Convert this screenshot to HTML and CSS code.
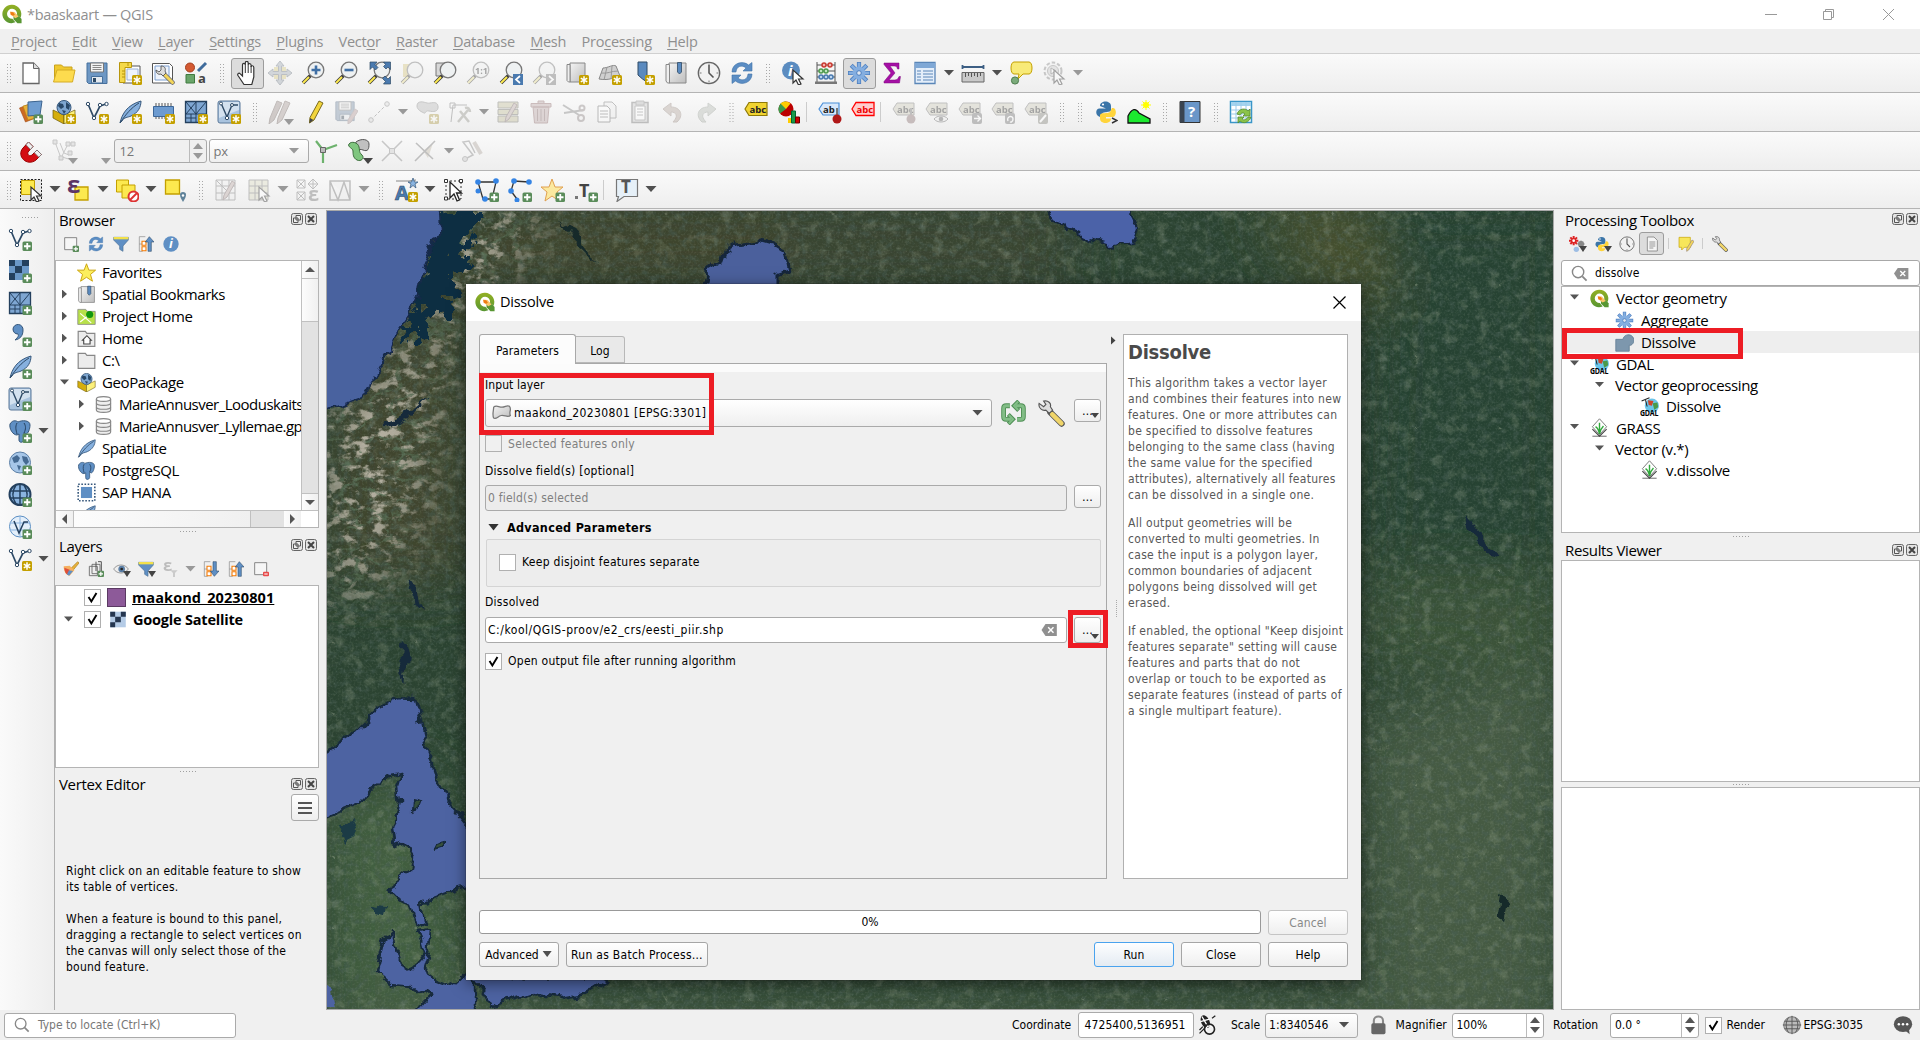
FILE: index.html
```html
<!DOCTYPE html>
<html lang="en">
<head>
<meta charset="utf-8">
<title>*baaskaart — QGIS</title>
<link rel="stylesheet" href="styles.css">
</head>
<body>
<svg class="defs" width="0" height="0">
<defs>
<linearGradient id="gq" x1="0" y1="0" x2="0" y2="1"><stop offset="0" stop-color="#93b023"/><stop offset="1" stop-color="#589632"/></linearGradient>
<linearGradient id="gb" x1="0" y1="0" x2="1" y2="1"><stop offset="0" stop-color="#e8f0f8"/><stop offset="1" stop-color="#7d9fc4"/></linearGradient>
<linearGradient id="gg" x1="0" y1="0" x2="1" y2="1"><stop offset="0" stop-color="#f4f4f4"/><stop offset="1" stop-color="#bdbdbd"/></linearGradient>
<g id="plus"><rect x="14.500" y="14.500" width="9.500" height="9.500" rx="1.5" fill="#5a8c5a"/><path d="M19.250 16v6.500M16 19.250h6.500" stroke="#fff" stroke-width="1.8"/></g>
<g id="spark"><rect x="14" y="14" width="10" height="10" rx="1.500" fill="#c4a000"/><path d="M19 15.200v7.600M15.800 17.100l6.400 3.800M15.800 20.900l6.400-3.800" stroke="#fff" stroke-width="1.500"/></g>
<g id="lens"><path d="M9.500 14.500L2 22" stroke="#3b3b3b" stroke-width="3.600"/><path d="M8 16l-6 6" stroke="#fce94f" stroke-width="2"/><circle cx="15" cy="9" r="7.800" fill="#eef1f2" stroke="#777" stroke-width="1.300"/></g>
<g id="vee"><path d="M3 4l6 14 6-12 6-2" fill="none" stroke="#2e4a66" stroke-width="1.700"/><g fill="#fff" stroke="#2e4a66"><circle cx="3" cy="4" r="1.700"/><circle cx="9" cy="18" r="1.700"/><circle cx="15" cy="5" r="1.700"/><circle cx="21.500" cy="4" r="1.700"/></g></g>
<g id="cur"><path d="M12 9v13l3-3 2.500 5 2.500-1-2.500-5h4.500z" fill="#fff" stroke="#333" stroke-width="1.200"/></g>
<g id="pencil"><path d="M18 1l4 2-9 17-4.500 3 .5-5.500z" fill="#f2d53c" stroke="#7a6a1e"/><path d="M8.500 23l.5-5 3.500 2z" fill="#444"/></g>
<symbol id="q" viewBox="0 0 24 24"><path d="M12 1a11 11 0 1 0 4 21l-3.500-4.200A6 6 0 1 1 18 12.500l4.200 4A11 11 0 0 0 12 1z" fill="url(#gq)"/><path d="M13.500 13.500l5.500-.5 4.500 5V23h-5l-4.500-4.500z" fill="#589632"/><path d="M9.500 9l5.500.5L20 15l-4 2-5.500-4z" fill="#f9c66b"/><path d="M10 9.500l3.500.5 2 3-2 1-3-1z" fill="#ee7913"/></symbol>
<symbol id="new" viewBox="0 0 24 24"><path d="M4 2h10.500L20 7.500V22.500H4z" fill="#fff" stroke="#666" stroke-width="1.300"/><path d="M14.500 2v5.500H20" fill="#ddd" stroke="#666"/></symbol>
<symbol id="open" viewBox="0 0 24 24"><path d="M2.500 20V4h7l2 2h8.500v4" fill="#f0c92e" stroke="#c9a21c"/><path d="M1.500 21l3.500-12h18l-2.500 12z" fill="#fddb4e" stroke="#d5ac24"/></symbol>
<symbol id="save" viewBox="0 0 24 24"><path d="M2 2h20v20.500H3.500L2 21z" fill="#6d97c4" stroke="#47709c"/><path d="M5.500 2h13v9h-13z" fill="#f3f3f3" stroke="#777"/><path d="M7.500 4.500h9M7.500 6.500h9M7.500 8.500h9" stroke="#888"/><path d="M6.500 15.500h11V22h-11z" fill="#e4eaf0" stroke="#47709c"/><path d="M8 17h3v4H8z" fill="#2e4a66"/></symbol>
<symbol id="layout" viewBox="0 0 24 24"><path d="M5 5h17v17H5z" fill="#fff" stroke="#555"/><path d="M9 8h11v11H9z" fill="#eef3fb" stroke="#9ab2d8"/><path d="M1.500 1.500h12v5H7v15H1.500z" fill="#f5d94a" stroke="#b8960c"/><path d="M4 10h3M4 13h3M4 16h3M10 2v3" stroke="#b8960c"/><use href="#spark"/></symbol>
<symbol id="report" viewBox="0 0 24 24"><path d="M1.500 2.500h17l3 3V22h-20z" fill="#fff" stroke="#555"/><path d="M4 5h14v14H4z" fill="#eef3fb" stroke="#7d9fd0"/><path d="M13 13l8.500 8.500" stroke="#666" stroke-width="4.500" stroke-linecap="round"/><path d="M14 14l7.500 7.500" stroke="#f3d55a" stroke-width="3" stroke-linecap="round"/><path d="M10 5c4 0 5 3 4 5l1 2-3 3-2-2c-3 1-5-1-5-4l3 2 2-2z" fill="#ddd" stroke="#555" stroke-width=".9"/></symbol>
<symbol id="style" viewBox="0 0 24 24"><circle cx="6" cy="6.500" r="4.500" fill="#d45a32" stroke="#a33f1e"/><path d="M14 10L22 2" stroke="#3f6c9c" stroke-width="3"/><path d="M2 13.500h8.500V22H2z" fill="#6aa56a" stroke="#3f7a3f"/><text x="14" y="22" font-size="13" fill="#444">a</text></symbol>
<symbol id="pan" viewBox="0 0 24 24"><path d="M9 23.500L3 14.500c-1-2 1-3 2.300-1.600L7.500 15V4c0-2.300 2.800-2.300 2.800 0V2c0-2.200 2.900-2.200 2.900 0V4c0-2 2.900-2 2.900.300V6c0-1.800 2.700-1.700 2.700.500V16l-2 7.500z" fill="#fff" stroke="#333" stroke-width="1.200"/><path d="M10.300 4v8M13.200 4v8M16.100 5v7" stroke="#333"/></symbol>
<symbol id="move" viewBox="0 0 24 24"><path d="M6 6h12v12H6z" fill="#e8d040"/><path d="M12 0l4 5h-2.500v5.500H19V8l5 4-5 4v-2.500h-5.500V19H16l-4 5-4-5h2.500v-5.500H5V16l-5-4 5-4v2.500h5.500V5H8z" fill="#9dafc2" stroke="#5f7388" stroke-width=".9"/></symbol>
<symbol id="zin" viewBox="0 0 24 24"><use href="#lens"/><path d="M15 4.500v9M10.500 9h9" stroke="#3f6fa5" stroke-width="2.600"/></symbol>
<symbol id="zout" viewBox="0 0 24 24"><use href="#lens"/><path d="M10.500 9h9" stroke="#3f6fa5" stroke-width="2.600"/></symbol>
<symbol id="zfull" viewBox="0 0 24 24"><use href="#lens"/><path d="M3 1h7L8 3.500l3 3L8.500 9l-3-3L3 8.500zM23.500 1h-7l2 2.500-2 2L19 8l2-2 2.500 2.500zM23.500 23h-7l2-2.500-3-3 2.500-2.500 3 3 2.500-2.500z" fill="#4a7aaf" stroke="#2e4a66" stroke-width=".7"/></symbol>
<symbol id="zsel" viewBox="0 0 24 24"><path d="M3 3h11v13H3z" fill="#e9c93e"/><use href="#lens"/></symbol>
<symbol id="zlay" viewBox="0 0 24 24"><path d="M3 2h11v13H3z" fill="#d8d8d8" stroke="#777"/><use href="#lens"/></symbol>
<symbol id="znat" viewBox="0 0 24 24"><use href="#lens"/><text x="9" y="12.500" font-size="9" font-weight="bold" fill="#333">1:1</text></symbol>
<symbol id="zlast" viewBox="0 0 24 24"><use href="#lens"/><path d="M14 13h10v11H14z" fill="#4a7aaf"/><path d="M21 15l-4 3.500 4 3.500" fill="none" stroke="#fff" stroke-width="1.700"/></symbol>
<symbol id="znext" viewBox="0 0 24 24"><use href="#lens"/><path d="M14 13h10v11H14z" fill="#777"/><path d="M17 15l4 3.500-4 3.500" fill="none" stroke="#fff" stroke-width="1.700"/></symbol>
<symbol id="nmap" viewBox="0 0 24 24"><path d="M5 2h15v19H5z" fill="url(#gg)" stroke="#888"/><path d="M2 3.500h3V21H3.500L2 19.500z" fill="#eee" stroke="#888"/><use href="#spark"/></symbol>
<symbol id="n3d" viewBox="0 0 24 24"><path d="M5 7c5 0 10-4 13-2l4 10c-6 1-10 5-21 3z" fill="#cfcfcf" stroke="#888"/><path d="M9 6L6 19M14 5l-1 13M3 12c7 1 10-2 17-2" fill="none" stroke="#999"/><use href="#spark"/></symbol>
<symbol id="nbm" viewBox="0 0 24 24"><path d="M7 1h9v20l-4.500-3L7 14z" fill="#5a8abf" stroke="#2e4a66"/><use href="#spark"/></symbol>
<symbol id="bms" viewBox="0 0 24 24"><path d="M5 2h17v20H5z" fill="url(#gg)" stroke="#888"/><path d="M2 3.500h3.500V22H3.500L2 20z" fill="#eee" stroke="#888"/><path d="M13.500 1.500h4V11l-2 2-2-2z" fill="#5a8abf" stroke="#2e4a66" stroke-width=".8"/></symbol>
<symbol id="clock" viewBox="0 0 24 24"><circle cx="12" cy="12" r="10.700" fill="#f2f2f2" stroke="#666" stroke-width="1.300"/><path d="M12 4v8l4.500 4.500" fill="none" stroke="#555" stroke-width="1.600"/><path d="M12 2.500v2M12 19.500v2M2.500 12h2M19.500 12h2" stroke="#777"/></symbol>
<symbol id="refresh" viewBox="0 0 24 24"><path d="M2 11C2 2 13-1 18.500 4L22 1.500V10h-9l3-3C12 3.500 6.500 5 6 11zM22 13c0 9-11 12-16.500 7L2 22.500V14h9l-3 3c4 3.500 9.500 2 10-4z" fill="#5b8dc4" stroke="#4273a8" stroke-width=".6"/></symbol>
<symbol id="ident" viewBox="0 0 24 24"><circle cx="10" cy="9.500" r="9" fill="#5b8cc0"/><text x="7" y="15" font-size="15" font-style="italic" font-weight="bold" font-family="Liberation Serif" fill="#fff">i</text><use href="#cur"/></symbol>
<symbol id="abac" viewBox="0 0 24 24"><path d="M3 1v21M21 1v21M3 4h18M3 10h18M3 16h18" stroke="#555"/><path d="M1 20.500h22V23H1z" fill="#777"/><g stroke-width="1.500"><g fill="#f6b3ad" stroke="#c93a30"><circle cx="10" cy="4" r="2"/><circle cx="16" cy="4" r="2"/></g><g fill="#bfe6bf" stroke="#4f9a4f"><circle cx="7" cy="10" r="2"/><circle cx="12" cy="10" r="2"/></g><g fill="#bcd6f0" stroke="#4a7aaf"><circle cx="7" cy="16" r="2"/><circle cx="12" cy="16" r="2"/><circle cx="17" cy="16" r="2"/></g></g></symbol>
<symbol id="gear" viewBox="0 0 24 24"><g stroke="#4d7fc0" stroke-width="4.200"><path d="M12 1v22M1 12h22M4.200 4.200l15.600 15.600M19.800 4.200L4.200 19.800"/></g><g stroke="#84aee0" stroke-width="2.600"><path d="M12 1.700v20.600M1.700 12h20.600M4.700 4.700l14.600 14.600M19.300 4.700L4.700 19.300"/></g><circle cx="12" cy="12" r="6.500" fill="#84aee0"/><circle cx="12" cy="12" r="2.300" fill="#e3e9f1" stroke="#4d7fc0"/></symbol>
<symbol id="action" viewBox="0 0 24 24"><circle cx="11" cy="10" r="8.500" fill="#eee" stroke="#888" stroke-width="2" stroke-dasharray="3.500 2"/><circle cx="11" cy="10" r="5.500" fill="#ccc" stroke="#888"/><path d="M9 7l5 3-5 3z" fill="#fff" stroke="#666"/><use href="#cur"/></symbol>
<symbol id="sigma" viewBox="0 0 24 24"><path d="M4 2h15v6h-1.500c-.5-2.500-1.500-3-4-3H10l5 7-6 7h5.500c2.500 0 3.500-1 4.500-3.500h1.500L19.500 22H4v-1.500l7-8.500L4 3.500z" fill="#a510a5" stroke="#7c0a7c" stroke-width=".5"/></symbol>
<symbol id="table" viewBox="0 0 24 24"><path d="M2 1.500h20v21H2z" fill="#e4eefa" stroke="#5a86b8" stroke-width="1.300"/><path d="M2 2h20v5H2z" fill="#7fa8d6"/><path d="M4 10h4M4 13h4M4 16h4M4 19h4M10 10h10M10 13h10M10 16h10M10 19h10" stroke="#5a86b8" stroke-width="1.200"/></symbol>
<symbol id="ruler" viewBox="0 0 24 24"><path d="M1 6h22M1.500 4v4M22.500 4v4" stroke="#3d5f84" stroke-width="1.800"/><path d="M1 11.500h22V21H1z" fill="#c9c9c9" stroke="#666"/><path d="M4.500 12v4M7.500 12v3M10.500 12v4M13.500 12v3M16.500 12v4M19.500 12v3" stroke="#555"/></symbol>
<symbol id="tip" viewBox="0 0 24 24"><path d="M5 1h15c4 0 4 12 0 12h-6l-5 5 1-5H5C1 13 1 1 5 1z" fill="#f8ea78" stroke="#c4a000"/><circle cx="6" cy="19.500" r="3.600" fill="#7bab7b" stroke="#4d7c4d"/></symbol>
<symbol id="vlay" viewBox="0 0 24 24"><path d="M.5 8l10-4 6 14-10 4z" fill="#cc6a24" stroke="#a04a10" stroke-width=".6"/><path d="M4 6l13-3 3 14-11 3z" fill="#e8b13a" stroke="#b8860b" stroke-width=".6"/><path d="M9 2l14-1-2 14-12 1z" fill="#6f9dd0" stroke="#3c648f"/><use href="#plus"/></symbol>
<symbol id="gpkg" viewBox="0 0 24 24"><path d="M1 10l11 5v9L1 18z" fill="#d5ae0c" stroke="#6b5a0a" stroke-width=".7"/><path d="M12 15l11-5v8l-11 6z" fill="#fcf07a" stroke="#6b5a0a" stroke-width=".7"/><circle cx="12" cy="7.500" r="7" fill="#7ea6d0" stroke="#35567a"/><path d="M7 3l4 1 1 3-3 2-3-3zM14 2l4 3-1 5-3-2zM10 10l4 1-2 3z" fill="#294868"/></symbol>
<symbol id="gpkgn" viewBox="0 0 24 24"><use href="#gpkg"/><use href="#spark"/></symbol>
<symbol id="veen" viewBox="0 0 24 24"><use href="#vee"/><use href="#spark"/></symbol>
<symbol id="veep" viewBox="0 0 24 24"><use href="#vee"/><use href="#plus"/></symbol>
<symbol id="feather" viewBox="0 0 24 24"><path d="M2 23C4 14 9 5 23 1c0 6-3 12-10 15-3 1.500-7 1-9 5z" fill="#86b0de" stroke="#35567a"/><path d="M2 23C8 14 13 8 21 3" fill="none" stroke="#2e4a66"/></symbol>
<symbol id="feathern" viewBox="0 0 24 24"><use href="#feather"/><use href="#spark"/></symbol>
<symbol id="featherp" viewBox="0 0 24 24"><use href="#feather"/><use href="#plus"/></symbol>
<symbol id="chip" viewBox="0 0 24 24"><path d="M5 3v16M8 3v16M11 3v16M14 3v16M17 3v16M20 3v16" stroke="#555"/><path d="M2.500 6.500h20v10h-20z" fill="#6d9bd0" stroke="#3d6798"/><use href="#spark"/></symbol>
<symbol id="meshb" viewBox="0 0 24 24"><path d="M1.500 1.500h21v21h-21z" fill="#7ea6d2" stroke="#24405e" stroke-width="1.300"/><path d="M2 14h20M12 2v20M2 2l10 12M12 2L2 14M22 2L12 14M2 18h10M7 14v8" stroke="#24405e" fill="none"/></symbol>
<symbol id="meshn" viewBox="0 0 24 24"><use href="#meshb"/><use href="#spark"/></symbol>
<symbol id="meshp" viewBox="0 0 24 24"><use href="#meshb"/><use href="#plus"/></symbol>
<symbol id="gpsb" viewBox="0 0 24 24"><rect x="1" y="1" width="22" height="22" rx="2" fill="#a9c3de" stroke="#5b7899"/><path d="M2 2h20v8L2 18z" fill="#d3e1ef"/><path d="M4 3l6 14 5-12h6" fill="none" stroke="#2e4a66" stroke-width="1.400"/><g fill="#fff" stroke="#2e4a66"><circle cx="4" cy="3.500" r="1.500"/><circle cx="10" cy="18" r="1.700"/><circle cx="15" cy="5" r="1.500"/></g></symbol>
<symbol id="gpsn" viewBox="0 0 24 24"><use href="#gpsb"/><use href="#spark"/></symbol>
<symbol id="gpsp" viewBox="0 0 24 24"><use href="#gpsb"/><use href="#plus"/></symbol>
<symbol id="pens" viewBox="0 0 24 24"><path d="M9 1l5 2-8 17-5 4 1-6z" fill="#a88f86" stroke="#80685f"/><path d="M17 1l5 2-8 17-5 4 1-6z" fill="#b59c93" stroke="#80685f"/></symbol>
<symbol id="pen" viewBox="0 0 24 24"><use href="#pencil"/></symbol>
<symbol id="saved" viewBox="0 0 24 24"><use href="#save" width="22" height="22"/><path d="M21 9l3 2-7 11-3 2v-4z" fill="#c99" stroke="#a88"/></symbol>
<symbol id="seg" viewBox="0 0 24 24"><path d="M4 20L20 4" stroke="#777" stroke-dasharray="3 2"/><circle cx="4" cy="20" r="2.300" fill="#ddd" stroke="#888"/><circle cx="20" cy="4" r="2.300" fill="#ddd" stroke="#888"/></symbol>
<symbol id="blob" viewBox="0 0 24 24"><path d="M2 6c0-6 7-4 10-3s10-3 11 3-5 6-9 5-3 3-5 2-7-3-7-7z" fill="#bbb" stroke="#888"/><use href="#spark"/></symbol>
<symbol id="vtool" viewBox="0 0 24 24"><path d="M3 22L5 5h14M2 3h5v5H2z" fill="none" stroke="#777"/><path d="M10 22L20 10M12 11l9 11M17 8c3-1 5 1 5 4" fill="none" stroke="#998" stroke-width="2.500"/></symbol>
<symbol id="attr" viewBox="0 0 24 24"><path d="M2 2h20v6H2zM2 9.500h20v5H2zM2 16h20v6H2z" fill="#c9c27a" stroke="#776"/><path d="M18 3l3 2-8 14-4 3 1-5z" fill="#c9a8a0" stroke="#866"/></symbol>
<symbol id="trash" viewBox="0 0 24 24"><path d="M4 7h16l-1.500 16h-13zM2 3.500h20V7H2zM9 3.500V1h6v2.500" fill="#cda6a6" stroke="#a66"/><path d="M8.500 9v12M12 9v12M15.500 9v12" stroke="#966"/></symbol>
<symbol id="cut" viewBox="0 0 24 24"><path d="M1 5l16 10M2 13l20-3" stroke="#888" stroke-width="2"/><circle cx="19" cy="18" r="3" fill="none" stroke="#988" stroke-width="2"/><circle cx="20" cy="8" r="2.500" fill="none" stroke="#988" stroke-width="2"/></symbol>
<symbol id="copy" viewBox="0 0 24 24"><path d="M9 2h8l4 4v12H9z" fill="#eee" stroke="#777"/><path d="M3 6h9l3 3v13H3z" fill="#fff" stroke="#666"/><path d="M5 11h8M5 14h8M5 17h8" stroke="#777"/></symbol>
<symbol id="paste" viewBox="0 0 24 24"><path d="M4 2.500h16v20H4z" fill="#ccc" stroke="#777" stroke-width="1.500"/><path d="M7 6h10v14H7z" fill="#fff" stroke="#888"/><path d="M8 1h8v4H8zM9 9h6M9 12h6M9 15h6" fill="#bbb" stroke="#888"/></symbol>
<symbol id="undo" viewBox="0 0 24 24"><path d="M2 9l8-6v4c10 0 13 9 6 15h-4c6-6 3-10-2-10v4z" fill="#c2a897" stroke="#a58b7c"/></symbol>
<symbol id="redo" viewBox="0 0 24 24"><path d="M22 9l-8-6v4C4 7 1 16 8 22h4C6 16 9 12 14 12v4z" fill="#b5bfb0" stroke="#98a394"/></symbol>
<symbol id="abcy" viewBox="0 0 24 24"><path d="M1 9l4-6.500h18v13H5z" fill="#f1d430" stroke="#8f7a08" stroke-width="1.200"/><text x="5.500" y="12.500" font-size="9.500" font-weight="bold" fill="#222">abc</text></symbol>
<symbol id="abcr" viewBox="0 0 24 24"><path d="M1 9l4-6.500h18v13H5z" fill="#fcc" stroke="#f00" stroke-width="1.300"/><text x="5.500" y="12.500" font-size="9.500" font-weight="bold" fill="#e00">abc</text></symbol>
<symbol id="abcp" viewBox="0 0 24 24"><path d="M1 9l4-6h16v12H5z" fill="#d8e8fb" stroke="#4a8fd8" stroke-width="1.200"/><text x="5" y="12.500" font-size="9.500" font-weight="bold" fill="#222">ab</text><path d="M19 8v8" stroke="#777" stroke-width="2"/><circle cx="19" cy="19" r="4.500" fill="#b01818"/></symbol>
<g id="abct"><path d="M1 9l4-6h17v12H5z" fill="#cfcba8" stroke="#777"/><text x="5" y="12.500" font-size="9.500" font-weight="bold" fill="#333">abc</text></g>
<symbol id="abcg" viewBox="0 0 24 24"><use href="#abct"/><rect x="14" y="13" width="10" height="11" rx="2" fill="#777"/><path d="M16 18.500h6M19.500 15.500l3 3-3 3" fill="none" stroke="#fff" stroke-width="1.400"/></symbol>
<symbol id="abch" viewBox="0 0 24 24"><use href="#abct"/><rect x="14" y="13" width="10" height="11" rx="2" fill="#777"/><path d="M17 21c-2-5 5-6 5-2s-3 3-3 3" fill="none" stroke="#fff" stroke-width="1.400"/></symbol>
<symbol id="abci" viewBox="0 0 24 24"><use href="#abct"/><rect x="14" y="13" width="10" height="11" rx="2" fill="#887"/><path d="M16 22l6-7" fill="none" stroke="#fff" stroke-width="2"/></symbol>
<symbol id="abcd" viewBox="0 0 24 24"><use href="#abct"/><path d="M19 8v8" stroke="#777" stroke-width="2"/><circle cx="19" cy="19" r="4.500" fill="#a07070"/></symbol>
<symbol id="abce" viewBox="0 0 24 24"><use href="#abct"/><path d="M9 19c3-4 11-4 14 0-3 4-11 4-14 0z" fill="#eee" stroke="#666"/><circle cx="16" cy="19" r="2.300" fill="#666"/></symbol>
<symbol id="pie" viewBox="0 0 24 24"><circle cx="9" cy="9" r="7.500" fill="#b00"/><path d="M9 9V1.500A7.500 7.500 0 0 0 3 13.500z" fill="#3a9a4a"/><path d="M9 9L3.500 3.500a7.500 7.500 0 0 1 10 0z" fill="#fc0"/><path d="M11 18h4v5h-4z" fill="#fc0"/><path d="M14.500 11h4v12h-4z" fill="#1a9a4a" stroke="#063"/><path d="M18.500 17h4v6h-4z" fill="#c00" stroke="#600"/></symbol>
<symbol id="py" viewBox="0 0 24 24"><path d="M6 6c0-6 11-6 11 0v4c0 3-8 1-9 4l-.500 3C1 17 1 9 5 8.500h7" fill="#3b75a8"/><path d="M18 8c5-1 5 8 1 9h-7v1.500h5c0 6-11 6-11 0V15c1-3 8-1 10-3z" fill="#ffd43b"/><circle cx="9" cy="4.500" r="1.100" fill="#fff"/></symbol>
<symbol id="pyc" viewBox="0 0 24 24"><use href="#py"/><path d="M18 18l5 2.500-5 2.500" fill="none" stroke="#333" stroke-width="1.500"/></symbol>
<symbol id="shade" viewBox="0 0 24 24"><path d="M1 23V16C5 8 9 8 12 13l11 6v4z" fill="#1bea2f" stroke="#111" stroke-width="1.300"/><circle cx="19" cy="5" r="3" fill="#ff0"/><path d="M19 0v10M14 5h10M15.500 1.500l7 7M22.500 1.500l-7 7" stroke="#ff0"/></symbol>
<symbol id="help" viewBox="0 0 24 24"><path d="M2 1.500h20v21H2z" fill="#6a96c8" stroke="#333"/><path d="M2 1.500h4.500v21H2z" fill="#3a4450"/><text x="10" y="17" font-size="15" font-family="Liberation Serif" fill="#fff">?</text></symbol>
<symbol id="sheet" viewBox="0 0 24 24"><path d="M1.500 1.500h21v21h-21z" fill="#fff" stroke="#3a96c8" stroke-width="1.500"/><path d="M2 2h20v4H2z" fill="#a4d3ee"/><path d="M2 10h20M2 14h20M2 18h20M7 2v20M12 2v20M17 2v20" stroke="#9ccbe8"/><path d="M8 14c2-6 9-6 11-3l2-2v7h-7l2-2c-2-2-4-1-5 1zM22 17c-2 6-8 7-11 4l-2 2v-6h6l-2 2c2 2 5 0 6-2z" fill="#8bc34a" stroke="#558b2f" stroke-width=".8"/></symbol>
<symbol id="magnet" viewBox="0 0 24 24"><path d="M9.500 3l4.500 4.500-5 5.500c-1 2.500 1.500 5 4 3l5-5 4.500 4.500-5.500 5.500C8 28-3 17 4 9z" fill="#d40d12" stroke="#900"/><path d="M9.500 3l4.500 4.500-2.500 3L7 5.800zM18 11l4.500 4.500-2.700 2.700-4.500-4.500z" fill="#eee" stroke="#777" stroke-width=".8"/></symbol>
<symbol id="snap" viewBox="0 0 24 24"><path d="M3 3l6 16 7-14h5M8 4l4 10 5 2M10 18l10 3" fill="none" stroke="#888"/><g fill="#ccc" stroke="#888"><path d="M1 1h4v4H1zM7 17h4v4H7zM14 3h4v4h-4zM19 3h4v4h-4zM16 12h4v4h-4z"/></g></symbol>
<symbol id="topo" viewBox="0 0 24 24"><path d="M2 2l7 9L9 24M9 11l14-5" fill="none" stroke="#6db26d" stroke-width="2.200"/><path d="M6.500 8.500h5v5h-5z" fill="#bbb" stroke="#666"/></symbol>
<symbol id="overlap" viewBox="0 0 24 24"><path d="M9 3c5-4 13-3 13 2s-1 8-6 6-8 2-8-2 0-4 1-6z" fill="#c0c0c0" stroke="#555"/><path d="M2 5c2-3 9-2 10 3s0 5 3 8-1 7-5 5S6 15 6 12 0 8 2 5z" fill="#7fc67f" stroke="#3f6f3f"/></symbol>
<symbol id="cross" viewBox="0 0 24 24"><path d="M2 2l20 20M22 2L2 22" stroke="#888" stroke-width="1.600"/><path d="M9.500 9.500h5v5h-5z" fill="#ccc" stroke="#888"/></symbol>
<symbol id="cross2" viewBox="0 0 24 24"><path d="M5 5l6 6 9-7-5 15-4-6z" fill="#cb9"/><path d="M2 22L22 2M3 4l17 16" fill="none" stroke="#777" stroke-width="1.600"/></symbol>
<symbol id="trace" viewBox="0 0 24 24"><path d="M4 20l8-4L2 3l6-1 6 12" fill="none" stroke="#888" stroke-width="1.500"/><circle cx="4" cy="20" r="2.500" fill="#ccc" stroke="#888"/><path d="M13 3l7 12" stroke="#b9a99a" stroke-width="4" fill="none"/></symbol>
<symbol id="sel" viewBox="0 0 24 24"><path d="M1.500 1.500h21v21h-21z" fill="#e6e6e6" stroke="#222" stroke-dasharray="2 1.500"/><path d="M2.500 2.500h13v14h-13z" fill="#fce94f" stroke="#c4a000"/><use href="#cur"/></symbol>
<symbol id="expr" viewBox="0 0 24 24"><path d="M8 9h13v13H8z" fill="#fce94f" stroke="#c4a000" stroke-width="1.300"/><text x="0" y="15" font-size="24" font-family="Liberation Serif" font-weight="bold" fill="#5c3566">ε</text></symbol>
<symbol id="desel" viewBox="0 0 24 24"><path d="M1.500 2h12v12h-12z" fill="#fce94f" stroke="#c4a000"/><path d="M7 7h13v13H7z" fill="#fce94f" stroke="#c4a000"/><circle cx="18.500" cy="18.500" r="5" fill="#fff" stroke="#d33" stroke-width="2"/><path d="M15 22l7-7" stroke="#d33" stroke-width="2"/></symbol>
<symbol id="selloc" viewBox="0 0 24 24"><path d="M2.500 2h14v14h-14z" fill="#fce94f" stroke="#c4a000" stroke-width="1.300"/><path d="M20 24c-4-6-4-10 0-10s4 4 0 10z" fill="#5f8299"/><circle cx="20" cy="17.500" r="1.200" fill="#fff"/></symbol>
<symbol id="mesh1" viewBox="0 0 24 24"><path d="M2 2h19v20H2zM2 8h19M2 15h19M8 2v20M15 2v20M2 2l6 6M8 8l7 7" fill="#eee" stroke="#777"/><path d="M18 3l3 2-8 14-4 3 1-5z" fill="#c9a8a0" stroke="#866"/></symbol>
<symbol id="mesh2" viewBox="0 0 24 24"><path d="M2 2h19v20H2zM2 8h19M2 15h19M8 2v20M15 2v20" fill="#dda" stroke="#777"/><use href="#cur"/></symbol>
<symbol id="mesh3" viewBox="0 0 24 24"><path d="M2 2h8v8H2zM2 2l8 8M10 2l-8 8M18 1l5 5-5 5-5-5zM13 6h10M18 1v10M2 14h8v8H2zM2 14l8 8M10 14l-8 8" fill="none" stroke="#777"/><text x="13" y="23" font-size="20" font-family="Liberation Serif" font-weight="bold" fill="#777">ε</text></symbol>
<symbol id="mesh4" viewBox="0 0 24 24"><path d="M2 3h20v19H2zM2 3l8 19L16 4l6 18" fill="#eee" stroke="#777" stroke-width="1.500"/></symbol>
<symbol id="annA" viewBox="0 0 24 24"><path d="M2 3h13l7-1" fill="none" stroke="#888"/><text x="1" y="22" font-size="20" font-family="DejaVu Serif" font-weight="bold" fill="#4a7aaf" stroke="#2e4a66" stroke-width=".6">A</text><path d="M19 0l1.500 4H24l-3 2 1 4-3-2.500L16 10l1-4-3-2h3.500z" fill="#8ab4e0" stroke="#35567a" stroke-width=".7"/><use href="#spark"/></symbol>
<symbol id="annS" viewBox="0 0 24 24"><path d="M4 3h15v18H4z" fill="none" stroke="#333" stroke-dasharray="2 2"/><path d="M2.500 1.500h3v3h-3zM17.500 1.500h3v3h-3zM2.500 19h3v3h-3z" fill="#fff" stroke="#333"/><path d="M8 4v16l4-4 3 7 2.500-1-3-7h5z" fill="#fff" stroke="#222" stroke-width="1.300"/></symbol>
<symbol id="annP" viewBox="0 0 24 24"><path d="M3 4h18l-4 17H8z" fill="none" stroke="#333" stroke-width="1.300"/><g fill="#3584e4"><circle cx="3" cy="4" r="2.800"/><circle cx="21" cy="3" r="2.800"/><circle cx="10" cy="21" r="2.800"/><circle cx="3" cy="13" r="2.500"/></g><use href="#plus"/></symbol>
<symbol id="annL" viewBox="0 0 24 24"><path d="M21 4L6 3 3 13l6 8" fill="none" stroke="#333" stroke-width="1.300"/><g fill="#3584e4"><circle cx="21" cy="4" r="2.800"/><circle cx="6" cy="3" r="2.800"/><circle cx="3" cy="13" r="2.800"/><circle cx="9" cy="22" r="2.500"/></g><use href="#plus"/></symbol>
<symbol id="annM" viewBox="0 0 24 24"><path d="M11 1l3 8h8l-6 5 2 9-7-5-7 5 2-9-6-5h8z" fill="#fbe9a0" stroke="#e0a050"/><use href="#plus"/></symbol>
<symbol id="annT" viewBox="0 0 24 24"><path d="M1 18h3v3H1z" fill="#777"/><text x="5" y="19" font-size="18" font-family="Liberation Serif" font-weight="bold" fill="#444">T</text><use href="#plus"/></symbol>
<symbol id="annB" viewBox="0 0 24 24"><path d="M1.500 1.500h21v17H9l-7 5 1.500-5h-2z" fill="#e6f0f8" stroke="#777" stroke-width="1.200"/><text x="6" y="15" font-size="17" font-family="Liberation Serif" font-weight="bold" fill="#555">T</text></symbol>
<symbol id="raster" viewBox="0 0 24 24"><path d="M1 1h20v20H1z" fill="#6b98c8"/><path d="M1 1h6v6H1zM14 1h7v6h-7zM7 7h7v7H7zM1 14h6v7H1z" fill="#24405e"/><use href="#plus"/></symbol>
<symbol id="comma" viewBox="0 0 24 24"><path d="M5 6a5 5 0 1 1 10 1c0 6-3 9-8 10 3-3 4-4 3-6-3 0-5-2-5-5z" fill="#5f8fc4" stroke="#35567a"/><use href="#plus"/></symbol>
<symbol id="pg" viewBox="0 0 24 24"><path d="M2 5c3-5 7-3 8-2 4-2 12-2 12 3 0 4-2 9-4 9l-2-1v7c-1 3-5 3-5 0v-6l-2 1C5 16 1 10 2 5z" fill="#5f8fc4" stroke="#35567a"/><path d="M9 4c-2 4-1 7 0 11M16 4c2 3 2 6 0 10" fill="none" stroke="#24405e"/></symbol>
<symbol id="pgp" viewBox="0 0 24 24"><use href="#pg"/><use href="#plus"/></symbol>
<symbol id="globe1" viewBox="0 0 24 24"><circle cx="12" cy="11.500" r="10.500" fill="#a6c6e8" stroke="#5b7fa6"/><path d="M4 7l5-3 3 3-2 4-4 1zM14 5l5 1 2 5-3 3-3-4zM9 14l4 1-2 5z" fill="#456a92"/><use href="#plus"/></symbol>
<symbol id="globe2" viewBox="0 0 24 24"><circle cx="12" cy="11.500" r="10.500" fill="#8ab4e0" stroke="#24405e" stroke-width="2"/><path d="M2 8h20M2 15h20M12 1v21M8 2c-4 6-4 13 0 19M16 2c4 6 4 13 0 19" fill="none" stroke="#24405e" stroke-width="1.500"/><use href="#plus"/></symbol>
<symbol id="globe3" viewBox="0 0 24 24"><circle cx="12" cy="11.500" r="10.500" fill="#e4effa" stroke="#5b8fc4"/><path d="M2 8h20M2 15h20M12 1v21" stroke="#8ab4e0"/><path d="M6 6l5 12 5-11h4" fill="none" stroke="#24405e" stroke-width="1.500"/><use href="#plus"/></symbol>
<symbol id="addbox" viewBox="0 0 24 24"><path d="M2.500 2.500h18v18h-18z" fill="#f6f6f6" stroke="#777" stroke-width="1.300"/><use href="#plus"/></symbol>
<symbol id="rembox" viewBox="0 0 24 24"><path d="M2.500 2.500h18v18h-18z" fill="#f6f6f6" stroke="#777" stroke-width="1.300"/><rect x="15" y="16" width="9" height="7" rx="1.500" fill="#e84a4a"/><path d="M17 19.500h5" stroke="#fff" stroke-width="1.600"/></symbol>
<symbol id="funnel" viewBox="0 0 24 24"><path d="M1 2h22v4l-8 9v8l-5-3v-5L1 6z" fill="#5f8fc4" stroke="#4a6f96"/><path d="M1 1.500h22V5H1z" fill="#f2e04a"/></symbol>
<symbol id="collapse" viewBox="0 0 24 24"><path d="M2 1h9M2 1v22h5M2 12h5" fill="none" stroke="#888"/><path d="M6 8h6v6H6zM6 16h6v6H6z" fill="#fff" stroke="#f57900" stroke-width="1.600"/><path d="M17 1l7 8h-4v14h-5V9h-4z" fill="#5f8fc4" stroke="#24405e" stroke-width=".8"/></symbol>
<symbol id="expand" viewBox="0 0 24 24"><path d="M2 1h9M2 1v22h5M2 12h5" fill="none" stroke="#888"/><path d="M6 8h6v6H6zM6 16h6v6H6z" fill="#fff" stroke="#f57900" stroke-width="1.600"/><path d="M17 23l7-8h-4V1h-5v14h-4z" fill="#5f8fc4" stroke="#24405e" stroke-width=".8"/></symbol>
<symbol id="info" viewBox="0 0 24 24"><circle cx="12" cy="12" r="11.500" fill="#5f8fc4"/><text x="9" y="18.500" font-size="19" font-style="italic" font-weight="bold" font-family="Liberation Serif" fill="#fff">i</text></symbol>
<symbol id="brush" viewBox="0 0 24 24"><path d="M22 1l2 2-9 11-3-3z" fill="#e8b13a" stroke="#a87c1a"/><path d="M1 8l9-1 7 7-7 8C5 22 1 16 1 8z" fill="#f5b060"/><path d="M2 10l8 3-3 8c-3-2-5-6-5-11z" fill="#e0503a"/><path d="M9 14l6 1-6 7-3-2z" fill="#5f8fc4"/></symbol>
<symbol id="group" viewBox="0 0 24 24"><path d="M2 8h12v14H2zM6 5h12v14H6z" fill="#eee" stroke="#666" stroke-width="1.300"/><path d="M12 15V1M15 1h5v15" fill="none" stroke="#555" stroke-width="1.500"/><use href="#plus"/></symbol>
<symbol id="eye" viewBox="0 0 24 24"><path d="M1 12c5-8 17-8 22 0-5 8-17 8-22 0z" fill="#eee" stroke="#999" stroke-width="1.500"/><circle cx="13" cy="12" r="5" fill="#5b7fa6"/><circle cx="13" cy="12" r="2" fill="#222"/></symbol>
<symbol id="eps" viewBox="0 0 24 24"><text x="0" y="15" font-size="25" font-family="Liberation Serif" font-weight="bold" fill="#777">ε</text><path d="M11 14h11l-4 4v6h-3v-6z" fill="#999"/></symbol>
<symbol id="star" viewBox="0 0 24 24"><path d="M12 1l3 8h8.500l-6.500 5.500 2.500 8.500-7.500-5-7.500 5L7 14.500.5 9H9z" fill="#fcee5c" stroke="#c9a20c" stroke-width="1.200"/></symbol>
<symbol id="phome" viewBox="0 0 24 24"><path d="M1 3h10l2 2.500h10V22H1z" fill="#b8e04a" stroke="#888"/><path d="M4 19L18 8M4 8l14 12" stroke="#fff" stroke-width="1.500"/><circle cx="16" cy="9.500" r="4.500" fill="#12960e"/></symbol>
<symbol id="fold" viewBox="0 0 24 24"><path d="M1.500 3h9l2 2.500h10V22h-21z" fill="#ececec" stroke="#888" stroke-width="1.500"/></symbol>
<symbol id="home" viewBox="0 0 24 24"><use href="#fold"/><path d="M7 14l5.500-5.500L18 14h-1.500v5h-8v-5z" fill="#fff" stroke="#444" stroke-width="1.400"/></symbol>
<symbol id="db" viewBox="0 0 24 24"><path d="M3 5v14c0 4 18 4 18 0V5" fill="#eee" stroke="#888" stroke-width="1.500"/><ellipse cx="12" cy="5" rx="9" ry="3" fill="#fff" stroke="#888" stroke-width="1.500"/><path d="M3 10c0 4 18 4 18 0M3 15c0 4 18 4 18 0" fill="none" stroke="#888" stroke-width="1.500"/></symbol>
<symbol id="hana" viewBox="0 0 24 24"><path d="M1.500 1.500h21v21h-21z" fill="none" stroke="#35567a" stroke-width="2" stroke-dasharray="2 2"/><path d="M5 5h14v14H5z" fill="#5f8fc4"/></symbol>
<symbol id="gsat" viewBox="0 0 24 24"><path d="M1 1h22v22H1z" fill="#b4cbe6"/><path d="M1 1h7v7H1zM16 1h7v7h-7zM8 8h8v8H8zM1 16h7v7H1z" fill="#253650"/></symbol>
<symbol id="gears" viewBox="0 0 24 24"><g stroke-width="3"><path d="M7 0v14M0 7h14M2 2l10 10M12 2L2 12" stroke="#d22"/><path d="M18 7v10M13 12h10M14.500 8.500l7 7M21.500 8.500l-7 7" stroke="#888"/></g><circle cx="7" cy="7" r="2" fill="#fff"/><circle cx="11" cy="20" r="4" fill="#9dbde4"/></symbol>
<symbol id="doc" viewBox="0 0 24 24"><path d="M5 1.500h10l5 5V22.500H5z" fill="#f4f4f4" stroke="#888" stroke-width="1.300"/><path d="M8 9h9M8 12h9M8 15h9M8 18h6" stroke="#888" stroke-width="1.300"/></symbol>
<symbol id="note" viewBox="0 0 24 24"><path d="M1.500 2h17v15h-9l-4 4v-4h-4z" fill="#f7e65a" stroke="#c4a000"/><path d="M21 6l3 2-8 13-3 2v-4z" fill="#f3d55a" stroke="#987"/></symbol>
<symbol id="wrench" viewBox="0 0 24 24"><path d="M11 11l10 10" stroke="#555" stroke-width="5.500" stroke-linecap="round"/><path d="M12.500 12.500l8.300 8.300" stroke="#f0d56a" stroke-width="4" stroke-linecap="round"/><path d="M5 1c4-1 7 2 6 5l2 3-3 3-3-3C4 10 0 7 1 3l4 3 2-2z" fill="#ddd" stroke="#555"/></symbol>
<symbol id="glass" viewBox="0 0 24 24"><circle cx="10" cy="10" r="8" fill="none" stroke="#888" stroke-width="2"/><path d="M16 16l6 6" stroke="#888" stroke-width="2.500"/></symbol>
<symbol id="clear" viewBox="0 0 24 24"><path d="M0 12l6-9h17v18H6z" fill="#909090"/><path d="M10 8l8 8M18 8l-8 8" stroke="#fff" stroke-width="2.200"/></symbol>
<symbol id="diss" viewBox="0 0 24 24"><path d="M1 8h9a7 7 0 1 1 10 7.500h-2V23H1z" fill="#7d97ad" stroke="#5f7b92"/></symbol>
<symbol id="gdal" viewBox="0 0 24 24"><circle cx="15" cy="11" r="9" fill="#6cc5ea"/><path d="M10 4l7 1-2 6-4-1z" fill="#d0452a"/><path d="M16 8l6-1 1 6-5 3z" fill="#4a9a4a"/><path d="M2 5l10-4M7 4l2 8" stroke="#222" stroke-width="1.300"/><text x="0" y="23.500" font-size="11" font-weight="bold" textLength="23" lengthAdjust="spacingAndGlyphs" fill="#000">GDAL</text></symbol>
<symbol id="grass" viewBox="0 0 24 24"><path d="M12 1l9 10-9 10-9-10z" fill="#fff" stroke="#777" stroke-width="1.200"/><path d="M3 14l9 9 9-9" fill="none" stroke="#444" stroke-width="1.400"/><path d="M12 20V6M12 20c-1-5-2-7-5-9M12 20c1-5 2-7 5-10" fill="none" stroke="#2fa83a" stroke-width="1.800"/><path d="M3 23h18" stroke="#444"/></symbol>
<symbol id="poly" viewBox="0 0 24 24"><path d="M2 5c3-3 6 0 10 0s6-3 9-1c3 4-1 6 1 11-3 3-7-1-11 0s-6 5-9 3c-2-4 0-9 0-13z" fill="url(#gg)" stroke="#777" stroke-width="1.500"/></symbol>
<symbol id="iter" viewBox="0 0 24 24"><g fill="none"><path d="M8.500 5.500H5Q2.500 5.500 2.500 8v8q0 2.500 2.500 2.500h5M15.500 18.500H19q2.500 0 2.500-2.500V8q0-2.500-2.500-2.500h-5" stroke="#4f8f55" stroke-width="4.600"/><path d="M17 1l-4.500 4.500L17 10M7 14l4.500 4.500L7 23" stroke="#4f8f55" stroke-width="4"/><path d="M8.500 5.500H5Q2.500 5.500 2.500 8v8q0 2.500 2.500 2.500h5M15.500 18.500H19q2.500 0 2.500-2.500V8q0-2.500-2.500-2.500h-5" stroke="#82bd86" stroke-width="2.800"/><path d="M16.500 1.500l-4 4 4 4M7.500 14.500l4 4-4 4" stroke="#82bd86" stroke-width="2"/></g></symbol>
<symbol id="chk" viewBox="0 0 17 17"><path d="M4 8l3.200 5L13 3.500" fill="none" stroke="#000" stroke-width="2.200"/></symbol>
<symbol id="float" viewBox="0 0 12 12"><rect x=".5" y=".5" width="11" height="11" rx="2" fill="#e4e4e4" stroke="#666"/><path d="M5 2.500h4.500V7H5zM2.500 5H7v4.500H2.500z" fill="#eee" stroke="#555"/></symbol>
<symbol id="shut" viewBox="0 0 12 12"><rect x=".5" y=".5" width="11" height="11" rx="2" fill="#e4e4e4" stroke="#666"/><path d="M3 3l6 6M9 3L3 9" stroke="#444" stroke-width="2"/></symbol>
<symbol id="extent" viewBox="0 0 24 24"><ellipse cx="10" cy="8" rx="5" ry="8" transform="rotate(-25 10 8)" fill="#222"/><path d="M6 2l7 12M4 8l11-3M12 22c5 2 9-2 8-6s-8-4-9 0z" fill="none" stroke="#fff" stroke-width="1.500"/><circle cx="15" cy="17" r="6" fill="none" stroke="#222" stroke-width="2"/><path d="M3 18l4-4M18 4l4-3M3 22l6-6" stroke="#222" stroke-width="1.500"/></symbol>
<symbol id="lock" viewBox="0 0 24 24"><path d="M7 11V7c0-7 11-7 11 0v4" fill="none" stroke="#888" stroke-width="2.500"/><rect x="4" y="10" width="17" height="13" rx="2" fill="#666"/></symbol>
<symbol id="crs" viewBox="0 0 24 24"><circle cx="12" cy="12" r="10" fill="#bbb" stroke="#666"/><path d="M1 12h22M3 7.500h18M3 16.500h18M12 1v22M8 3c-4 5-4 13 0 18M16 3c4 5 4 13 0 18" fill="none" stroke="#555" stroke-width="1.100"/></symbol>
<symbol id="bubble" viewBox="0 0 24 24"><ellipse cx="12" cy="11" rx="11" ry="9.500" fill="#555"/><path d="M14 18l6 5-1-8z" fill="#555"/><circle cx="7" cy="11" r="1.500" fill="#fff"/><circle cx="12" cy="11" r="1.500" fill="#fff"/><circle cx="17" cy="11" r="1.500" fill="#fff"/></symbol>
</defs>
</svg>

<div class="app">
<header class="titlebar"><svg class="logo"><use href="#q"/></svg><span class="wintitle">*baaskaart — QGIS</span>
<svg class="winctl" viewBox="0 0 132 12"><path d="M0 6.500h12M58.500 3.500h8v8h-8zM60.500 3.500v-2h8v8h-2M118 1l11 11M129 1l-11 11" fill="none" stroke="#999"/></svg></header>
<nav class="menu"><span><u>P</u>roject</span><span><u>E</u>dit</span><span><u>V</u>iew</span><span><u>L</u>ayer</span><span><u>S</u>ettings</span><span><u>P</u>lugins</span><span>Vect<u>o</u>r</span><span><u>R</u>aster</span><span><u>D</u>atabase</span><span><u>M</u>esh</span><span>Pro<u>c</u>essing</span><span><u>H</u>elp</span></nav>

<div class="tb"><i class="h"></i><b><svg><use href="#new"/></svg></b><b><svg><use href="#open"/></svg></b><b><svg><use href="#save"/></svg></b><b><svg><use href="#layout"/></svg></b><b><svg><use href="#report"/></svg></b><b><svg><use href="#style"/></svg></b><i class="h"></i><b class="on"><svg><use href="#pan"/></svg></b><b class="off"><svg><use href="#move"/></svg></b><b><svg><use href="#zin"/></svg></b><b><svg><use href="#zout"/></svg></b><b><svg><use href="#zfull"/></svg></b><b class="off"><svg><use href="#zsel"/></svg></b><b><svg><use href="#zlay"/></svg></b><b class="off"><svg><use href="#znat"/></svg></b><b><svg><use href="#zlast"/></svg></b><b class="off"><svg><use href="#znext"/></svg></b><b><svg><use href="#nmap"/></svg></b><b><svg><use href="#n3d"/></svg></b><b><svg><use href="#nbm"/></svg></b><b><svg><use href="#bms"/></svg></b><b><svg><use href="#clock"/></svg></b><b><svg><use href="#refresh"/></svg></b><i class="h"></i><b><svg><use href="#ident"/></svg></b><b><svg><use href="#abac"/></svg></b><b class="on"><svg><use href="#gear"/></svg></b><b><svg><use href="#sigma"/></svg></b><b><svg><use href="#table"/></svg></b><i class="a"></i><b><svg><use href="#ruler"/></svg></b><i class="a"></i><b><svg><use href="#tip"/></svg></b><b class="off"><svg><use href="#action"/></svg></b><i class="a dim"></i></div>

<div class="tb"><i class="h"></i><b><svg><use href="#vlay"/></svg></b><b><svg><use href="#gpkgn"/></svg></b><b><svg><use href="#veen"/></svg></b><b><svg><use href="#feathern"/></svg></b><b><svg><use href="#chip"/></svg></b><b><svg><use href="#meshn"/></svg></b><b><svg><use href="#gpsn"/></svg></b><i class="h"></i><b class="off dd"><svg><use href="#pens"/></svg></b><b><svg><use href="#pen"/></svg></b><b class="off"><svg><use href="#saved"/></svg></b><b class="off"><svg><use href="#seg"/></svg></b><i class="a dim"></i><b class="off"><svg><use href="#blob"/></svg></b><b class="off"><svg><use href="#vtool"/></svg></b><i class="a dim"></i><b class="off"><svg><use href="#attr"/></svg></b><b class="off"><svg><use href="#trash"/></svg></b><b class="off"><svg><use href="#cut"/></svg></b><b class="off"><svg><use href="#copy"/></svg></b><b class="off"><svg><use href="#paste"/></svg></b><b class="off"><svg><use href="#undo"/></svg></b><b class="off"><svg><use href="#redo"/></svg></b><i class="h n"></i><b><svg><use href="#abcy"/></svg></b><b><svg><use href="#pie"/></svg></b><i class="s"></i><b><svg><use href="#abcp"/></svg></b><b><svg><use href="#abcr"/></svg></b><i class="s"></i><b class="off"><svg><use href="#abcd"/></svg></b><b class="off"><svg><use href="#abce"/></svg></b><b class="off"><svg><use href="#abcg"/></svg></b><b class="off"><svg><use href="#abch"/></svg></b><b class="off"><svg><use href="#abci"/></svg></b><i class="h"></i><i class="h w"></i><b><svg><use href="#pyc"/></svg></b><b><svg><use href="#shade"/></svg></b><i class="h"></i><b><svg><use href="#help"/></svg></b><i class="h"></i><b><svg><use href="#sheet"/></svg></b></div>

<div class="tb"><i class="h"></i><b><svg><use href="#magnet"/></svg></b><b class="off dd"><svg><use href="#snap"/></svg></b><b class="off dd"></b><span class="spin dis big"><em>12</em><i class="ud"></i></span><span class="combo dis unit"><em>px</em><i class="a dim"></i></span><b><svg><use href="#topo"/></svg></b><b class="dd"><svg><use href="#overlap"/></svg></b><b class="off"><svg><use href="#cross"/></svg></b><b class="off"><svg><use href="#cross2"/></svg></b><i class="a dim"></i><b class="off"><svg><use href="#trace"/></svg></b></div>

<div class="tb last"><i class="h"></i><b><svg><use href="#sel"/></svg></b><i class="a"></i><b><svg><use href="#expr"/></svg></b><i class="a"></i><b><svg><use href="#desel"/></svg></b><i class="a"></i><b><svg><use href="#selloc"/></svg></b><i class="h"></i><b class="off"><svg><use href="#mesh1"/></svg></b><b class="off"><svg><use href="#mesh2"/></svg></b><i class="a dim"></i><b class="off"><svg><use href="#mesh3"/></svg></b><b class="off"><svg><use href="#mesh4"/></svg></b><i class="a dim"></i><i class="h"></i><b><svg><use href="#annA"/></svg></b><i class="a"></i><b><svg><use href="#annS"/></svg></b><b><svg><use href="#annP"/></svg></b><b><svg><use href="#annL"/></svg></b><b><svg><use href="#annM"/></svg></b><b><svg><use href="#annT"/></svg></b><i class="s"></i><b><svg><use href="#annB"/></svg></b><i class="a"></i></div>

<main class="main">
<aside class="side"><i class="dots"></i><b><svg><use href="#veep"/></svg></b><b><svg><use href="#raster"/></svg></b><b><svg><use href="#meshp"/></svg></b><b><svg><use href="#comma"/></svg></b><b><svg><use href="#featherp"/></svg></b><b><svg><use href="#gpsp"/></svg></b><b><svg><use href="#pgp"/></svg><i class="a"></i></b><b><svg><use href="#globe1"/></svg></b><b><svg><use href="#globe2"/></svg></b><b><svg><use href="#globe3"/></svg></b><b><svg><use href="#veen"/></svg><i class="a"></i></b></aside>

<section class="docks left">
<div class="head"><span>Browser</span><svg><use href="#float"/></svg><svg><use href="#shut"/></svg></div>
<div class="mini"><b><svg><use href="#addbox"/></svg></b><b><svg><use href="#refresh"/></svg></b><b><svg><use href="#funnel"/></svg></b><b><svg><use href="#collapse"/></svg></b><b><svg><use href="#info"/></svg></b></div>
<div class="box browser">
 <div class="bmain"><div class="tree ui">
 <div class="row"><i></i><svg><use href="#star"/></svg>Favorites</div>
 <div class="row"><i class="r"></i><svg><use href="#bms"/></svg>Spatial Bookmarks</div>
 <div class="row"><i class="r"></i><svg><use href="#phome"/></svg>Project Home</div>
 <div class="row"><i class="r"></i><svg><use href="#home"/></svg>Home</div>
 <div class="row"><i class="r"></i><svg><use href="#fold"/></svg>C:\</div>
 <div class="row"><i class="d"></i><svg><use href="#gpkg"/></svg>GeoPackage</div>
 <div class="row sub"><i class="r"></i><svg><use href="#db"/></svg>MarieAnnusver_Looduskaits</div>
 <div class="row sub"><i class="r"></i><svg><use href="#db"/></svg>MarieAnnusver_Lyllemae.gp</div>
 <div class="row"><i></i><svg><use href="#feather"/></svg>SpatiaLite</div>
 <div class="row"><i></i><svg><use href="#pg"/></svg>PostgreSQL</div>
 <div class="row"><i></i><svg><use href="#hana"/></svg>SAP HANA</div>
 <div class="row"><i></i><svg><use href="#feather"/></svg>MS SQL Server</div>
 </div><div class="vs"><i class="sb up"></i><i class="thumb"></i><i class="track"></i><i class="sb dn"></i></div></div>
 <div class="hs"><i class="sb lt"></i><i class="thumb"></i><i class="track"></i><i class="sb rt"></i></div>
</div>
<div class="split"><i class="dots"></i></div>
<div class="head"><span>Layers</span><svg><use href="#float"/></svg><svg><use href="#shut"/></svg></div>
<div class="mini"><b><svg><use href="#brush"/></svg></b><b><svg><use href="#group"/></svg></b><b class="dd"><svg><use href="#eye"/></svg></b><b class="dd"><svg><use href="#funnel"/></svg></b><b class="off"><svg><use href="#eps"/></svg></b><i class="a dim"></i><b><svg><use href="#expand"/></svg></b><b><svg><use href="#collapse"/></svg></b><b><svg><use href="#rembox"/></svg></b></div>
<div class="box layers ui">
 <div class="lrow first"><i></i><span class="cb"><svg><use href="#chk"/></svg></span><span class="swatch"></span><strong><u>maakond_20230801</u></strong></div>
 <div class="lrow"><i class="d"></i><span class="cb"><svg><use href="#chk"/></svg></span><svg class="gs"><use href="#gsat"/></svg><strong>Google Satellite</strong></div>
</div>
<div class="split"><i class="dots"></i></div>
<div class="head ve"><span>Vertex Editor</span><svg><use href="#float"/></svg><svg><use href="#shut"/></svg></div>
<div class="burger"><span><svg viewBox="0 0 14 12"><path d="M0 1h14M0 6h14M0 11h14" stroke="#555" stroke-width="2"/></svg></span></div>
<div class="vetext sm"><p>Right click on an editable feature to show<br>its table of vertices.</p><p>When a feature is bound to this panel,<br>dragging a rectangle to select vertices on<br>the canvas will only select those of the<br>bound feature.</p></div>
</section>

<div class="map">
<svg viewBox="327 211 1226 798" preserveAspectRatio="none">
<defs>
<filter id="rough" x="-5%" y="-5%" width="110%" height="110%"><feTurbulence type="fractalNoise" baseFrequency=".06" numOctaves="5" seed="4"/><feDisplacementMap in="SourceGraphic" scale="14" xChannelSelector="R" yChannelSelector="G"/></filter>
<filter id="islets" x="-10%" y="-10%" width="120%" height="120%"><feTurbulence type="fractalNoise" baseFrequency=".07" numOctaves="5" seed="14"/><feDisplacementMap in="SourceGraphic" scale="60" xChannelSelector="R" yChannelSelector="G"/></filter>
<filter id="soft" x="-50%" y="-50%" width="200%" height="200%"><feGaussianBlur stdDeviation="28"/></filter>
<filter id="darkn" x="0" y="0" width="100%" height="100%"><feTurbulence type="fractalNoise" baseFrequency=".16" numOctaves="4" seed="11"/><feColorMatrix values="0 0 0 0 .07  0 0 0 0 .12  0 0 0 0 .1  3 0 0 0 -1.350"/></filter>
<filter id="liten" x="0" y="0" width="100%" height="100%"><feTurbulence type="fractalNoise" baseFrequency=".09" numOctaves="5" seed="23"/><feColorMatrix values="0 0 0 0 .36  0 0 0 0 .42  0 0 0 0 .3  0 4 0 0 -2.100"/></filter>
<filter id="veins" x="0" y="0" width="100%" height="100%"><feTurbulence type="turbulence" baseFrequency=".012 .014" numOctaves="7" seed="31"/><feColorMatrix values="0 0 0 0 .45  0 0 0 0 .5  0 0 0 0 .36  -9 0 0 0 .8"/></filter>
<filter id="ridge" x="0" y="0" width="100%" height="100%"><feTurbulence type="turbulence" baseFrequency=".035 .05" numOctaves="6" seed="7"/><feColorMatrix values="0 0 0 0 .1  0 0 0 0 .17  0 0 0 0 .1  -9 0 0 0 1.900"/></filter>
<filter id="snow" x="0" y="0" width="100%" height="100%"><feTurbulence type="fractalNoise" baseFrequency=".07 .1" numOctaves="6" seed="9"/><feColorMatrix values="0 0 0 0 .5  0 0 0 0 .47  0 0 0 0 .39  0 6 0 0 -3.100"/></filter>
<filter id="grain" x="0" y="0" width="100%" height="100%"><feTurbulence type="fractalNoise" baseFrequency=".5" numOctaves="2" seed="2"/><feColorMatrix values="0 0 0 0 .6  0 0 0 0 .65  0 0 0 0 .55  0 0 1.600 0 -.75"/></filter>
<mask id="mtn" maskUnits="userSpaceOnUse" x="327" y="211" width="1226" height="798"><rect x="327" y="211" width="1226" height="798" fill="#000"/><g filter="url(#soft)"><path d="M430 200h120l-60 90-50 60-20 150-40 80-53 50V410l60-40 60-100z" fill="#fff"/></g></mask>
<clipPath id="mc"><rect x="327" y="211" width="1226" height="798"/></clipPath>
</defs>
<g clip-path="url(#mc)">
<rect x="327" y="211" width="1226" height="798" fill="#2b4331"/>
<g filter="url(#soft)">
<path d="M327 400L480 200h330v90H470v290H327z" fill="#41452f"/>
<path d="M780 200h290v90H780z" fill="#3b4432"/>
<path d="M327 800l100-30 60 260H327z" fill="#425f3f"/>
<path d="M1360 720l200-60v400H327v-60h1033z" fill="#455a42"/>
<path d="M1370 560h190v110h-190z" fill="#3a5238"/>
<path d="M1380 200h190v370h-200z" fill="#284230"/>
<path d="M1250 200h110l40 100h-70z" fill="#49512f"/>
</g>
<rect x="327" y="211" width="1226" height="798" filter="url(#darkn)" opacity=".45"/>
<rect x="327" y="211" width="1226" height="798" filter="url(#liten)" opacity=".22"/>
<rect x="327" y="211" width="1226" height="798" filter="url(#veins)" opacity=".35"/>
<g mask="url(#mtn)"><rect x="327" y="211" width="300" height="500" filter="url(#snow)"/><rect x="327" y="211" width="300" height="500" filter="url(#ridge)" opacity=".85"/></g>
<rect x="327" y="211" width="1226" height="798" filter="url(#grain)" opacity=".2"/>
<g filter="url(#islets)"><path d="M440 205h40l-10 45-14 30-14 32-24 26-18 8 20-60z" fill="#0e2d43"/></g>
<g filter="url(#rough)">
<path d="M320 200h118l2 32-12 22-7 16-3 24-8 18-14 20-8 22-14 24-12 20-18 6-14 6-17 10z" fill="#4a629f" stroke="#16294a" stroke-width="2"/>
<path d="M702 292l4-22 14-8 4-11 12-7 22-3 14 4 13 8 4 18-12 4v20z" fill="#4b609c" stroke="#14273a" stroke-width="3"/>
<path d="M1044 200l8 22 22 10 18 8 20 6 22-6 4-10-8-16-12-14z" fill="#4c62a8" stroke="#14273a" stroke-width="2"/>
<path d="M320 756l30-20 28-28 18-10 18 1 6 22 6 26 10 30 12 22 26 32v54l-20 6-22 8-10 4 4 20-8 4-6-20-14-8-12-12 10-6 14-10 3-12-5-9-14-8-2-14 7-26-2-16 4-13-12 2-16 12-12 16-20 8-18 8-10 8z" fill="#4e63a2" stroke="#182a3c" stroke-width="2.500"/>
<path d="M384 938l8-8 8 30 12 8 12-14-6-22 12-2-2 20-6 20 12 8 20 8 20-18v50l-30 0-50 4 20-8 14-16-16-10-20-2-16-14z" fill="#4e63a2" stroke="#182a3c" stroke-width="2.500"/>
<path d="M470 970l60 8 70-2 8 4-22 14-24 4-30-6-40 14z" fill="#4e63a2" stroke="#182a3c" stroke-width="2.500"/>
<path d="M320 985l12 6 4 18h-16z" fill="#4e63a2"/>
<path d="M414 800l10 2-3 8-8 2zM434 842l8-2v8l-6 2z" fill="#36503a" stroke="#182a3c" stroke-width="2"/>
<path d="M384 424l24-12 20-16-20 24-18 8z" fill="#15293a"/>
<path d="M405 580l10 6 8 22-12-10zM402 640l6 14-4 34-5-26zM1465 514l10 12 24 32-8-2-20-22z" fill="#16293a"/>
<path d="M560 222l16 10 22 32-24-22zM1500 895l8 6-4 22-8-6z" fill="#172a2c"/>
<path d="M340 826l10-6 6 12-10 10zM372 905l14 2-2 8-12-2z" fill="#1b3a44"/>
</g>
</g>
</svg>
</div>

<section class="docks right">
<div class="head"><span>Processing Toolbox</span><svg><use href="#float"/></svg><svg><use href="#shut"/></svg></div>
<div class="mini"><b class="dd"><svg><use href="#gears"/></svg></b><b class="dd"><svg><use href="#py"/></svg></b><b><svg><use href="#clock"/></svg></b><b class="on"><svg><use href="#doc"/></svg></b><i class="s"></i><b><svg><use href="#note"/></svg></b><i class="s"></i><b><svg><use href="#wrench"/></svg></b></div>
<div class="search sm"><svg class="g"><use href="#glass"/></svg><span>dissolve</span><svg class="c"><use href="#clear"/></svg></div>
<div class="box ptree ui">
 <div class="row"><i class="d"></i><svg><use href="#q"/></svg>Vector geometry</div>
 <div class="row l1"><i></i><svg><use href="#gear"/></svg>Aggregate</div>
 <div class="row l1 hot"><i></i><svg><use href="#diss"/></svg>Dissolve</div>
 <div class="row"><i class="d"></i><svg><use href="#gdal"/></svg>GDAL</div>
 <div class="row l1 t"><i class="d"></i>Vector geoprocessing</div>
 <div class="row l2 t"><i></i><svg><use href="#gdal"/></svg>Dissolve</div>
 <div class="row"><i class="d"></i><svg><use href="#grass"/></svg>GRASS</div>
 <div class="row l1 t"><i class="d"></i>Vector (v.*)</div>
 <div class="row l2 t"><i></i><svg><use href="#grass"/></svg>v.dissolve</div>
</div>
<div class="split"><i class="dots"></i></div>
<div class="head rv"><span>Results Viewer</span><svg><use href="#float"/></svg><svg><use href="#shut"/></svg></div>
<div class="box rbox"></div>
<div class="split s2"><i class="dots"></i></div>
<div class="box rest"></div>
</section>
</main>

<footer class="status sm">
<div class="locate"><svg><use href="#glass"/></svg><span>Type to locate (Ctrl+K)</span></div>
<span class="lb w1">Coordinate</span><span class="fld coord">4725400,5136951</span><svg class="si ex"><use href="#extent"/></svg>
<span class="lb w2">Scale</span><span class="combo sc"><em>1:8340546</em><i class="a"></i></span><svg class="si lk"><use href="#lock"/></svg>
<span class="lb w3">Magnifier</span><span class="spin mg"><em>100%</em><i class="ud"></i></span>
<span class="lb w4">Rotation</span><span class="spin ro"><em>0.0 °</em><i class="ud"></i></span>
<span class="cb"><svg><use href="#chk"/></svg></span><span class="lb w5">Render</span><svg class="si"><use href="#crs"/></svg><span class="lb w6">EPSG:3035</span><svg class="si bu"><use href="#bubble"/></svg>
</footer>
</div>

<div class="dialog sm">
<div class="dtitle"><svg class="logo"><use href="#q"/></svg><span>Dissolve</span><svg class="x" viewBox="0 0 13 13"><path d="M.5.5l12 12M12.500.5l-12 12" stroke="#000" stroke-width="1.200"/></svg></div>
<div class="dbody">
<div class="dtop">
 <div class="dleft">
  <div class="tabs"><span class="tab act">Parameters</span><span class="tab">Log</span></div>
  <div class="pane"><div class="band"></div><div class="form">
   <div class="l1">Input layer</div>
   <div class="frow"><span class="combo inp"><svg><use href="#poly"/></svg><em>maakond_20230801 [EPSG:3301]</em><i class="a"></i></span><svg class="it"><use href="#iter"/></svg><svg class="wr"><use href="#wrench"/></svg><span class="dot top dd">…</span></div>
   <div class="ck c1"><span class="cb no"></span>Selected features only</div>
   <div class="l2">Dissolve field(s) [optional]</div>
   <div class="frow f2"><span class="line ro">0 field(s) selected</span><span class="dot">…</span></div>
   <div class="adv"><i></i><strong>Advanced Parameters</strong></div>
   <div class="grp"><span class="cb"></span>Keep disjoint features separate</div>
   <div class="l3">Dissolved</div>
   <div class="frow f2"><span class="line path"><em>C:/kool/QGIS-proov/e2_crs/eesti_piir.shp</em><svg><use href="#clear"/></svg></span><span class="dot dd full">…</span></div>
   <div class="ck c2"><span class="cb"><svg><use href="#chk"/></svg></span>Open output file after running algorithm</div>
  </div></div>
 </div>
 <div class="gut"><i class="tri"></i><i class="vd"></i></div>
 <div class="helpbox"><h2>Dissolve</h2>
 <p>This algorithm takes a vector layer<br>and combines their features into new<br>features. One or more attributes can<br>be specified to dissolve features<br>belonging to the same class (having<br>the same value for the specified<br>attributes), alternatively all features<br>can be dissolved in a single one.</p>
 <p>All output geometries will be<br>converted to multi geometries. In<br>case the input is a polygon layer,<br>common boundaries of adjacent<br>polygons being dissolved will get<br>erased.</p>
 <p>If enabled, the optional "Keep disjoint<br>features separate" setting will cause<br>features and parts that do not<br>overlap or touch to be exported as<br>separate features (instead of parts of<br>a single multipart feature).</p></div>
</div>
<div class="prow"><span class="prog">0%</span><span class="btn dis">Cancel</span></div>
<div class="brow"><span class="btn ad">Advanced<i class="a"></i></span><span class="btn batch">Run as Batch Process…</span><span class="fill"></span><span class="btn run">Run</span><span class="btn">Close</span><span class="btn">Help</span></div>
</div>
</div>
<div class="mark m1"></div><div class="mark m2"></div><div class="mark m3"></div>
</body>
</html>
```

FILE: styles.css
```css
*{box-sizing:border-box}
body{margin:0;width:1920px;height:1040px;overflow:hidden;background:#f0f0f0;color:#000;font-family:"Open Sans","Noto Sans",sans-serif;font-size:14.5px}
i,em{font-style:normal}
svg text{font-family:"Open Sans",sans-serif}
.defs{position:absolute}
.app{display:flex;flex-direction:column;width:1920px;height:1040px}
.ui,.menu,.head,.wintitle{font-size:14.5px;letter-spacing:-.35px}
.sm{font-family:"DejaVu Sans Condensed","DejaVu Sans",sans-serif;font-stretch:condensed;font-size:12px}
.titlebar{height:29px;background:#fff;display:flex;align-items:center;padding-left:2px;color:#8f8f8f;flex:none}
.logo{width:20px;height:20px;margin-top:-2px}
.wintitle{margin-left:5px;flex:1;letter-spacing:-.28px;padding-bottom:1px}
.winctl{width:132px;height:12px;margin-right:23px;margin-top:-2px}
.menu{height:25px;flex:none;display:flex;align-items:center;border-bottom:1px solid #d0d0d0;color:#8f8f8f;padding:0 0 0 11px;gap:15.300px;letter-spacing:-.24px}
.menu u{text-underline-offset:2px}

.tb{height:39px;flex:none;display:flex;align-items:center;background:linear-gradient(#fafafa,#eee);border-bottom:1px solid #b4b4b4}
.tb.last{height:38px}
.tb .h{width:18px;height:20px;flex:none;background:radial-gradient(circle,#a8a8a8 .8px,transparent 1px) 0 0/3px 3px;background-clip:content-box;padding:0 6px}
.tb>.h:first-child{width:14.500px;padding:0 3.500px 0 5px}
.tb .h.n{width:17px;padding:0 5.500px}
.tb .h.w{width:19px}
.tb>b{position:relative;width:33px;height:31px;flex:none;display:flex;align-items:center;justify-content:center;border:1px solid transparent}
.tb>b svg{width:24px;height:24px}
b.on{border:1px solid #9c9c9c!important;border-radius:3px;background:#dcdcdc}
.off svg{opacity:.42;filter:grayscale(.5)}
.a{width:15px;height:7px;flex:none;background:#505050;clip-path:polygon(2px 0,13px 0,7.500px 6px)}
.a.dim{background:#999}
.s{width:8px;height:20px;border-left:1px solid #ccc;flex:none}
.dd{position:relative}
.dd::after{content:"";position:absolute;right:2px;bottom:2px;border:5px solid transparent;border-top:6px solid #444;border-bottom:0}
.off.dd::after{border-top-color:#999}
.spin,.combo,.fld,.line{display:flex;align-items:center;background:#fff;border:1px solid #aaa;border-radius:3px;flex:none}
.spin em,.combo em{flex:1;white-space:nowrap}
.combo{background:linear-gradient(#fff,#efefef)}
.ud{align-self:stretch;width:17px;border-left:1px solid #bbb;display:flex;flex-direction:column;align-items:center;justify-content:center;gap:4px}
.ud::before,.ud::after{content:"";border:5px solid transparent;border-bottom:6px solid #555;border-top:0}
.ud::after{border:5px solid transparent;border-top:6px solid #555;border-bottom:0}
.tb .dis{color:#777;height:24px;font-size:13px;letter-spacing:-.2px}
.tb .big{width:93px;background:#f0f0f0;padding-left:5px}
.tb .unit{width:100px;margin-left:2px;margin-right:1px;padding:0 6px 0 4px}
.dis .ud::before{border-bottom-color:#999}.dis .ud::after{border-top-color:#999}

.main{display:flex;height:801px;flex:none}
.side{width:55px;border-right:1px solid #b0b0b0;background:linear-gradient(90deg,#fafafa,#eee);padding-top:7px;display:flex;flex-direction:column;flex:none}
.dots{width:17px;height:4px;background:radial-gradient(circle,#a0a0a0 .8px,transparent 1px) 0 0/3px 3px}
.side .dots{margin:0 0 0 21px}
.side b{height:32px;display:flex;align-items:center;padding-left:8px;gap:4px}
.side b svg{width:24px;height:24px;flex:none;margin-top:5px}
.side .a{margin-top:6px}
.docks{display:flex;flex-direction:column;flex:none}
.left{width:271px;padding-right:7px}
.head{height:22px;display:flex;align-items:center;padding:0 2px 0 4px;gap:2px;flex:none;font-size:15px}
.head span{flex:1;margin-top:-1px}
.head svg{width:12px;height:12px;margin-top:-2px}
.mini{height:29px;display:flex;align-items:center;padding:0 0 4px 3px;flex:none}
.mini b{width:25px;height:22px;display:flex;align-items:center;justify-content:center;border:1px solid transparent;flex:none}
.mini b svg{width:16px;height:16px}
.mini .dd::after{border-width:6px 4px 0 4px;bottom:2px;right:1px}
.box{background:#fff;border:1px solid #b4b4b4;flex:none}
.browser{height:268px;display:flex;flex-direction:column}
.bmain{height:249px;display:flex}
.tree{width:246px;height:249px;overflow:hidden}
.row{height:22px;display:flex;align-items:center;white-space:nowrap;font-size:15px}
.tree .row{letter-spacing:-.4px}
.row i,.lrow i{width:21px;height:9px;flex:none}
.row svg{width:19px;height:19px;flex:none;margin-right:6px}
.tree .row.sub{padding-left:17px;letter-spacing:-.52px}
i.r{background:#555;clip-path:polygon(6px 0,11px 4.500px,6px 9px)}
i.d{background:#555;clip-path:polygon(4px 2px,13px 2px,8.500px 7px)}
.vs{width:17px;border-left:1px solid #c0c0c0;display:flex;flex-direction:column}
.vs .sb{height:17px}.vs .thumb{height:44px;border:solid #c0c0c0;border-width:1px 0}.track{flex:1;background:#e2e2e2}
.vs .dn{border-top:1px solid #c0c0c0}
.hs{height:17px;border-top:1px solid #c0c0c0;display:flex}
.hs .sb{width:17px}.hs .thumb{width:178px;border:solid #c0c0c0;border-width:0 1px}.hs .rt{margin-right:17px}
.thumb,.sb{background:linear-gradient(90deg,#fcfcfc,#f0f0f0)}
.sb{display:flex;align-items:center;justify-content:center}
.sb::after{content:"";border:5px solid transparent}
.up::after{border-bottom-color:#555;border-top:0}.dn::after{border-top-color:#555;border-bottom:0}
.lt::after{border-right-color:#555;border-left:0}.rt::after{border-left-color:#555;border-right:0}
.split{height:7px;display:flex;align-items:center;justify-content:center;flex:none}
.layers{height:183px}
.split+.head+.mini{height:28px}
.lrow{height:22px;display:flex;align-items:center;font-size:14.500px;letter-spacing:-.2px}
.lrow.first{letter-spacing:.1px}
.lrow i{width:28px;margin-left:0}
.lrow i.d{clip-path:polygon(8px 2px,17px 2px,12.500px 7px)}
.cb{width:17px;height:17px;border:1px solid #b0b0b0;background:#fff;flex:none;display:flex}
.cb svg{width:15px;height:15px}
.cb.no{background:#f0f0f0}
.swatch{width:19px;height:19px;background:#8d5a99;border:1px solid #5b3a63;margin:0 6px}
.gs{width:18px;height:17px;margin:0 6px 0 8px}
.ve{height:19px}
.burger{height:27px;display:flex;justify-content:flex-end;flex:none}
.burger span{width:28px;border:1px solid #aaa;border-radius:3px;background:linear-gradient(#fff,#eee);display:flex;align-items:center;justify-content:center}
.burger svg{width:14px;height:12px}
.vetext{padding:42px 0 0 11px;line-height:16px;letter-spacing:.24px}
.vetext p{margin:0 0 16px;white-space:nowrap}
.map{width:1228px;margin-top:1px;height:800px;border:1px solid #a8a8a8;flex:none}
.map>svg{display:block;width:1226px;height:798px}
.right{width:366px;padding-left:7px}
.right .mini b{width:25px;margin:0}
.right .mini .s{margin-left:4px;width:5px;height:11px}
.right .mini{padding-left:3px}
.right .mini .on{height:23px}
.search{height:26px;background:#fff;border:1px solid #a8a8a8;border-radius:3px;display:flex;align-items:center;flex:none;padding:0 9px;letter-spacing:.1px}
.search span{flex:1}.search .g{width:17px;height:17px;margin-right:7px}.search .c{width:17px;height:15px}
.ptree{height:247px}
.ptree .row svg{margin-right:7px}
.ptree .row i{width:28px;margin-left:0}
.ptree .row i.d{clip-path:polygon(8px 1px,17px 1px,12.500px 6px)}
.ptree .l1{padding-left:25px}.ptree .l2{padding-left:50px}
.ptree .t{height:20.800px}
.hot{background:#eee}
.rv{height:19px;margin-top:1px}
.rbox{height:222px}.s2{height:5px}.rest{flex:1}

.status{height:30px;display:flex;align-items:center;flex:none}
.locate{width:232px;height:25px;margin-left:4px;border:1px solid #aaa;border-radius:3px;background:#fff;color:#777;display:flex;align-items:center;padding-left:9px;flex:none;margin-right:776px}
.locate svg{width:16px;height:16px;margin-right:8px}
.lb{white-space:nowrap;flex:none}
.w1{width:65.500px}.coord{width:116.500px;height:26px;padding-left:6px;white-space:nowrap;letter-spacing:.1px}
.si{width:20px;height:20px;flex:none}.ex{margin:0 14px 0 3px}
.w2{width:34px}.sc{width:92.500px;height:25px;padding:0 5px 0 3px;letter-spacing:.1px}
.lk{margin:0 8px 0 10px}.w3{width:56px;letter-spacing:.1px}
.mg{width:92px;height:25px;padding-left:4px;margin-right:9.500px}.w4{width:57px}
.ro.spin{width:88.500px;height:25px;padding-left:4px;margin-right:6px}.w5{width:55px;margin-left:5px}.w6{width:86px;margin-left:2px}
.bu{margin-left:3px}

.dialog{position:absolute;left:466px;top:284px;width:895px;height:696px;background:#f0f0f0;box-shadow:0 3px 14px rgba(0,0,0,.5),0 0 1px #222;display:flex;flex-direction:column}
.dtitle{height:37px;background:#fff;display:flex;align-items:center;padding:0 15px 0 9px;font-family:"Open Sans",sans-serif;font-stretch:normal;font-size:14.500px;letter-spacing:-.25px;flex:none}
.dtitle span{flex:1;margin:-2px 0 0 5px}.dtitle .x{width:13px;height:13px;margin-top:-1px}
.dbody{padding:13px 13px 0;display:flex;flex-direction:column}
.dtop{display:flex;height:545px}
.dleft{width:628px;display:flex;flex-direction:column}
.tabs{display:flex;align-items:flex-end;height:30px;margin-bottom:-1px;z-index:1;letter-spacing:.15px}
.tab{width:49px;height:27px;border:1px solid #b8b8b8;border-left:0;background:#e9e9e9;border-radius:0 3px 0 0;display:flex;align-items:center;justify-content:center;margin-bottom:1px;padding-top:2px}
.tab.act{width:97px;height:30px;background:#fcfcfc;border:1px solid #a8a8a8;border-bottom:0;border-radius:3px 3px 0 0;margin:0}
.pane{flex:1;border:1px solid #a8a8a8;background:#f0f0f0}
.band{height:8px;background:#fbfbfb}
.form{padding:0 5px;display:flex;flex-direction:column;letter-spacing:.27px}
.form .l1{height:27px;display:flex;align-items:center;padding-bottom:2px;letter-spacing:.1px}
.frow{display:flex;height:28px}
.inp{width:507px;padding:0 6px 0 5px;letter-spacing:.38px}
.inp svg{width:22px;height:20px;margin-right:1px}
.it{width:25px;height:25px;margin:1px 0 0 9px}.wr{width:27px;height:27px;margin:1px 0 0 12px}
.dot{width:27px;height:23px;margin-left:auto;border:1px solid #aaa;border-radius:3px;background:linear-gradient(#fff,#eee);display:flex;align-items:center;justify-content:center;flex:none}
.dot.dd::after{border-width:5px 4px 0;right:1px;bottom:3px}
.dot.full{height:26px}
.ck{display:flex;align-items:center;gap:6px}
.c1{height:33px;color:#808080}.c2{height:36px}
.form .l2{height:22px;display:flex;align-items:center;margin-bottom:3px}
.f2{height:26px}
.line{width:582px;padding:0 8px 0 2px}.line em{flex:1}.line svg{width:17px;height:16px}
.line.ro{background:#ececec;color:#808080;letter-spacing:.2px}
.path{letter-spacing:.53px}
.adv{height:28px;padding-top:4px;display:flex;align-items:center;gap:8px;padding-left:3px;font-size:12.500px;letter-spacing:.3px}
.adv i{width:11px;height:7px;background:#333;clip-path:polygon(0 0,100% 0,50% 100%)}
.grp{height:48px;margin-left:1px;border:1px solid #d4d4d4;border-radius:2px;background:#ededed;display:flex;align-items:center;gap:6px;padding:0 0 2px 12px;letter-spacing:.3px}
.form .l3{height:30px;display:flex;align-items:center}
.gut{width:16px;display:flex;flex-direction:column;align-items:center}
.tri{width:5px;height:9px;background:#444;clip-path:polygon(0 0,100% 50%,0 100%);margin:2px 4px 0 0}
.vd{width:1px;height:17px;border-left:1px dotted #aaa;margin:255px 0 0 2px}
.helpbox{width:225px;border:1px solid #b0b0b0;background:#fff;color:#585858;padding:0 0 0 4px;line-height:16px;white-space:nowrap;letter-spacing:.31px}
.helpbox h2{font-size:20px;line-height:24px;margin:5px 0 11px;color:#4a4a4a;letter-spacing:-.25px}
.helpbox p{margin:0 0 12px}
.prow{display:flex;margin-top:31px;gap:7px}
.prog{width:782px;height:24px;border:1px solid #999;border-radius:3px;background:#fff;display:flex;align-items:center;justify-content:center}
.btn{width:80px;height:25px;border:1px solid #a6a6a6;border-radius:3px;background:linear-gradient(#fff,#efefef);display:flex;align-items:center;justify-content:center;white-space:nowrap;flex:none;letter-spacing:.12px}
.btn.dis{color:#888;border-color:#c4c4c4}
.brow{display:flex;gap:7px;margin-top:7px}.fill{flex:1}
.ad{gap:3px;letter-spacing:0}.ad .a{width:11px;clip-path:polygon(1px 0,10px 0,5.500px 6px)}
.batch{width:142px;letter-spacing:.28px}.run{border-color:#4aa3ee;background:linear-gradient(#fdfeff,#e4ebf2)}
.mark{position:absolute;border:5px solid #ed1c24}
.m1{left:479px;top:373px;width:235px;height:62px}
.m2{left:1068px;top:610px;width:40px;height:38px}
.m3{left:1562px;top:328px;width:181px;height:31px}
```
